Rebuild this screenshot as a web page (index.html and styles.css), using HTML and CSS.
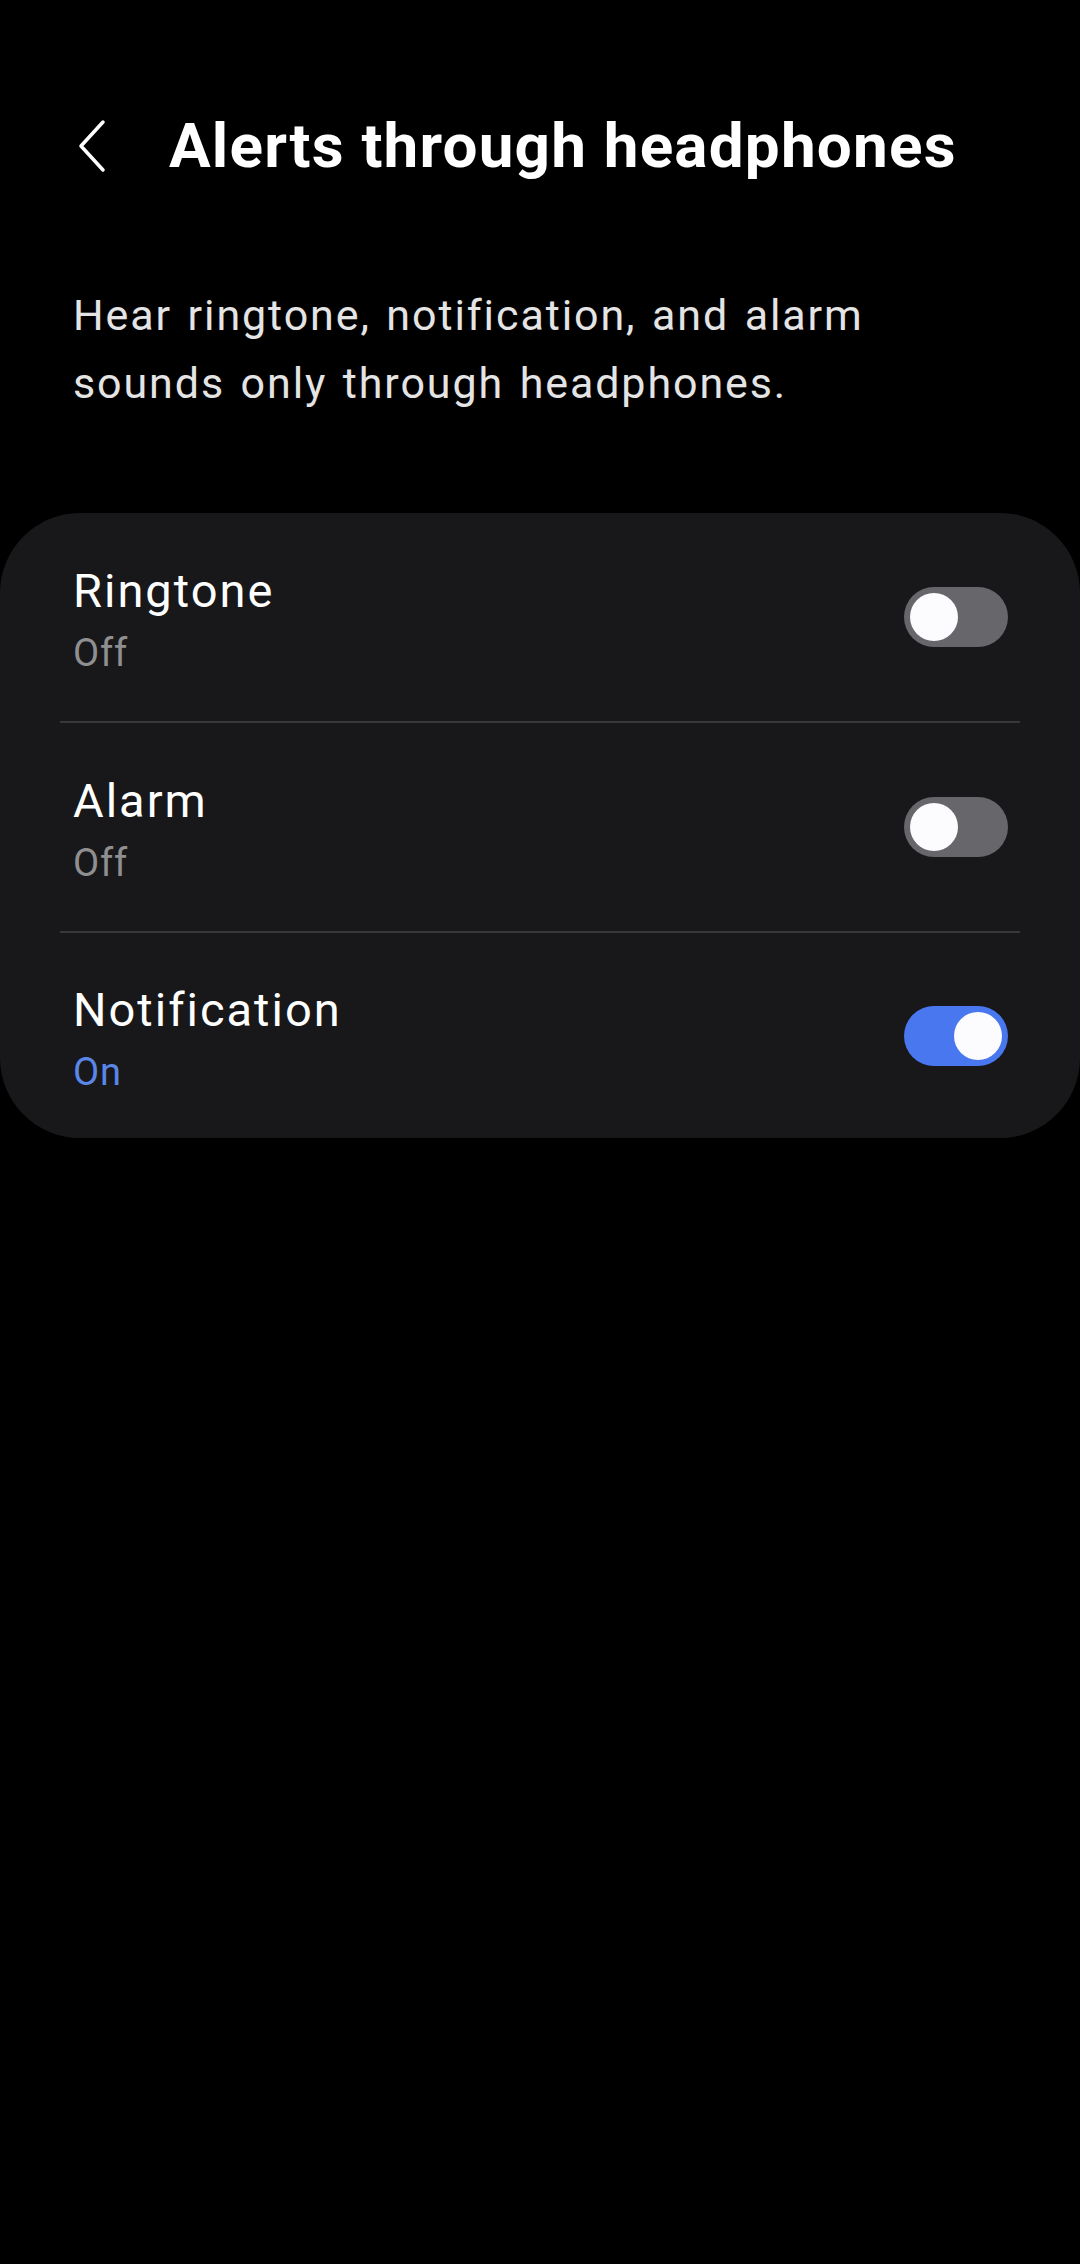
FILE: index.html
```html
<!DOCTYPE html>
<html lang="en">
<head>
    <meta charset="UTF-8">
    <meta name="viewport" content="width=device-width, initial-scale=1.0">
    <title>Alerts through headphones</title>
    <link rel="stylesheet" href="styles.css">
</head>
<body>
    <header class="top-bar">
        <button class="back-btn" aria-label="Back">
            <svg width="30" height="54" viewBox="0 0 30 54">
                <path d="M26 3 L4 27 L26 51" fill="none" stroke="#fff" stroke-width="3.5" stroke-linecap="round" stroke-linejoin="round"/>
            </svg>
        </button>
        <h1 class="page-title">Alerts through headphones</h1>
    </header>

    <p class="intro">Hear ringtone, notification, and alarm sounds only through headphones.</p>

    <!-- Lista de alertas -->
    <ul class="card">
        <li class="row">
            <div class="row-text">
                <span class="row-title">Ringtone</span>
                <span class="row-sub">Off</span>
            </div>
            <span class="switch"><span class="knob"></span></span>
        </li>
        <li class="row">
            <div class="row-text">
                <span class="row-title">Alarm</span>
                <span class="row-sub">Off</span>
            </div>
            <span class="switch"><span class="knob"></span></span>
        </li>
        <li class="row">
            <div class="row-text">
                <span class="row-title">Notification</span>
                <span class="row-sub on">On</span>
            </div>
            <span class="switch checked"><span class="knob"></span></span>
        </li>
    </ul>
</body>
</html>
```

FILE: styles.css
```css
body {
    margin: 0;
    background-color: #000;
    color: #fff;
    font-family: Roboto, "Noto Sans", sans-serif;
}
.top-bar {
    display: flex;
    align-items: center;
    height: 90px;
    padding-top: 101px;
}
.back-btn {
    width: 30px;
    height: 54px;
    margin-left: 77px;
    padding: 0;
    background: none;
    border: none;
    display: flex;
}
.page-title {
    margin: 0 0 0 62px;
    font-size: 62px;
    line-height: 90px;
    font-weight: 700;
    letter-spacing: 1.2px;
}
.intro {
    margin: 90px 130px 0 73px;
    font-size: 43px;
    line-height: 68px;
    letter-spacing: 1.9px;
    word-spacing: 3px;
    color: #e4e4e4;
}
.card {
    list-style: none;
    margin: 96px 0 0;
    padding: 0;
    background-color: #18181a;
    border-radius: 80px;
}
.row {
    display: flex;
    align-items: center;
    height: 208px;
    margin: 0 60px;
    padding: 0 12px 0 13px;
}
.row + .row {
    border-top: 2px solid #38383b;
}
.row:last-child {
    height: 205px;
}
.row-text {
    flex: 1;
    display: flex;
    flex-direction: column;
    padding-top: 12px;
}
.row-title {
    font-size: 47px;
    line-height: 60px;
    letter-spacing: 2px;
}
.row-sub {
    font-size: 38px;
    line-height: 64px;
    letter-spacing: 0.8px;
    color: #8f8f92;
}
.row-sub.on {
    color: #5a86e8;
}
.switch {
    position: relative;
    width: 104px;
    height: 60px;
    border-radius: 30px;
    background-color: #67666b;
}
.switch .knob {
    position: absolute;
    top: 6px;
    left: 6px;
    width: 48px;
    height: 48px;
    border-radius: 50%;
    background-color: #fcfcff;
}
.switch.checked {
    background-color: #4877ef;
}
.switch.checked .knob {
    left: 50px;
}
```
